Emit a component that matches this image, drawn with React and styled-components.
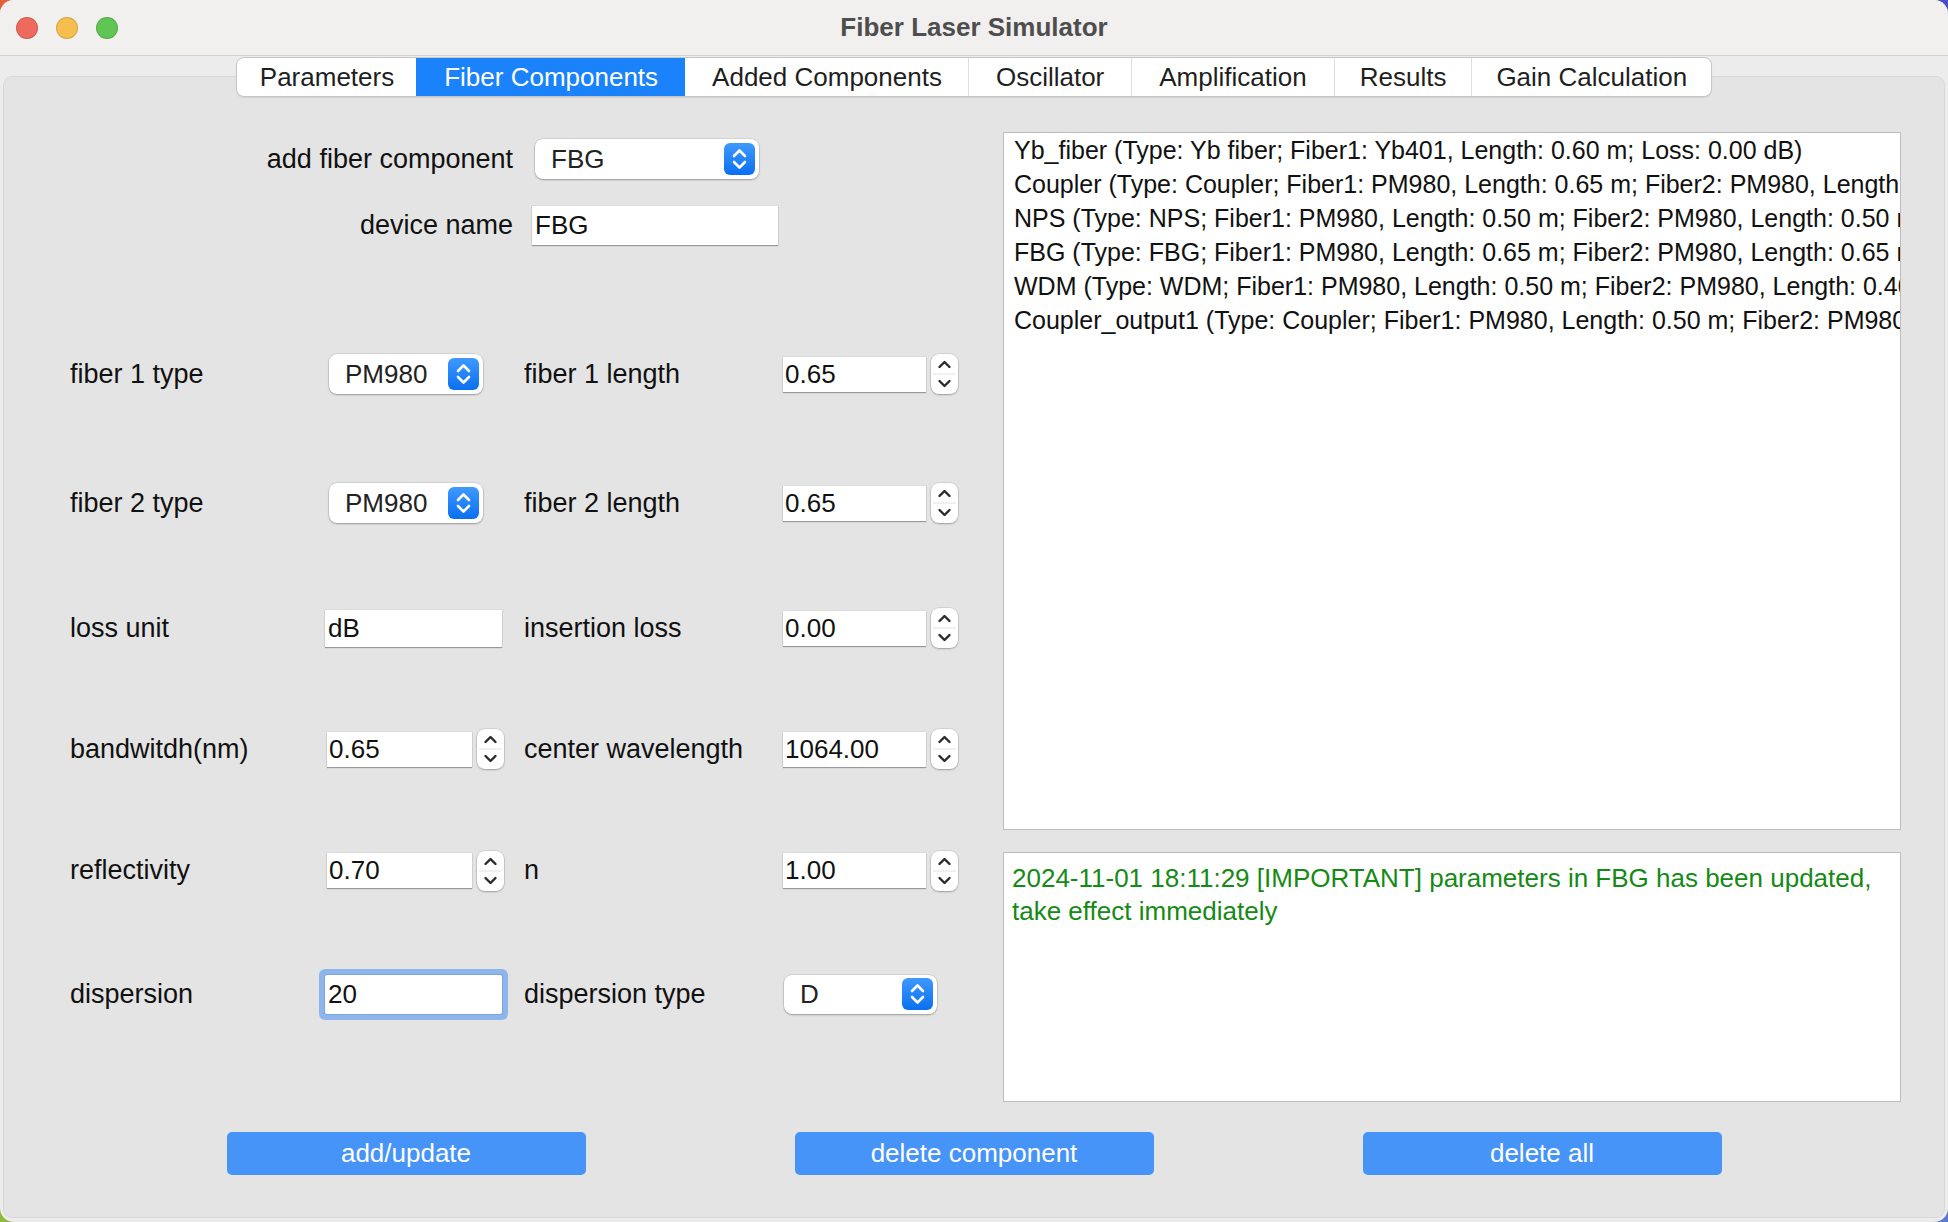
import React from 'react';
import styled, { createGlobalStyle } from 'styled-components';

const Global = createGlobalStyle`
  html, body { margin: 0; padding: 0; width: 1948px; height: 1222px; overflow: hidden; }
  body {
    background-color: #6d7fb8;
    background-image:
      radial-gradient(circle at 0 0, #e2603c 0, #e2603c 40px, transparent 41px),
      radial-gradient(circle at 100% 0, #4b4fc7 0, #4b4fc7 40px, transparent 41px),
      radial-gradient(circle at 0 100%, #8fba3a 0, #8fba3a 40px, transparent 41px),
      radial-gradient(circle at 100% 100%, #5b7ad0 0, #5b7ad0 40px, transparent 41px);
    font-family: "Liberation Sans", Arial, sans-serif;
  }
  #root { width: 1948px; height: 1222px; }
`;

const Window = styled.div`
  width: 1948px;
  height: 1222px;
  display: flex;
  flex-direction: column;
  background: #ececec;
  border-radius: 14px;
  overflow: hidden;
`;

const TitleBar = styled.div`
  height: 56px;
  flex: none;
  box-sizing: border-box;
  display: grid;
  grid-template-columns: 1fr auto 1fr;
  align-items: center;
  background: #f1f0ee;
  border-bottom: 1px solid #d3d3d3;
  padding: 0 16px;
`;

const Lights = styled.div`
  display: flex;
  gap: 18px;
`;

const Light = styled.span`
  width: 22px;
  height: 22px;
  border-radius: 50%;
  background: ${p => p.$c};
  box-shadow: inset 0 0 0 1px rgba(0, 0, 0, 0.12);
`;

const Title = styled.div`
  font-size: 26px;
  font-weight: bold;
  color: #4e4e4e;
`;

const Content = styled.div`
  flex: 1;
  display: flex;
  flex-direction: column;
  align-items: stretch;
  padding: 1px 3px 4px;
  min-height: 0;
`;

const TabBar = styled.div`
  align-self: center;
  display: flex;
  height: 40px;
  box-sizing: border-box;
  background: #fff;
  border: 1px solid #c6c6c6;
  border-radius: 8px;
  overflow: hidden;
  margin-bottom: -21px;
  position: relative;
  z-index: 1;
  box-shadow: 0 1px 1px rgba(0, 0, 0, 0.08);
`;

const Tab = styled.div`
  display: flex;
  align-items: center;
  padding: 0 ${p => p.$pad}px;
  font-size: 26px;
  color: ${p => (p.$active ? '#fff' : '#1f1f1f')};
  background: ${p => (p.$active ? '#1a82fb' : 'transparent')};
  border-left: 1px solid ${p => (p.$first || p.$active || p.$afterActive ? 'transparent' : '#dedede')};
  white-space: nowrap;
`;

const Pane = styled.div`
  flex: 1;
  display: flex;
  flex-direction: column;
  background: #e4e4e4;
  border: 1px solid #d8d8d8;
  border-radius: 9px;
  padding: 55px 43px 0 66px;
  min-height: 0;
`;

const Main = styled.div`
  display: flex;
  height: 970px;
`;

const LeftCol = styled.div`
  width: 933px;
  flex: none;
  display: flex;
  flex-direction: column;
`;

const RightCol = styled.div`
  width: 898px;
  flex: none;
  min-width: 0;
  display: flex;
  flex-direction: column;
  gap: 22px;
`;

const TopForm = styled.div`
  display: grid;
  grid-template-columns: 443px auto;
  grid-template-rows: 54px 78px;
  column-gap: 19px;
  align-items: center;
  justify-content: start;
`;

const FieldGrid = styled.div`
  margin-top: 45px;
  display: grid;
  grid-template-columns: 255px 199px 259px auto;
  grid-template-rows: 130px 128px 122px 120px 123px 124px;
  align-items: center;
  justify-content: start;
`;

const Label = styled.div`
  font-size: 27px;
  color: #111;
  white-space: nowrap;
  justify-self: ${p => (p.$right ? 'end' : 'start')};
`;

const Cell = styled.div`
  display: flex;
  align-items: center;
  margin-left: ${p => p.$ml || 0}px;
`;

const Combo = styled.div`
  width: ${p => p.$w}px;
  height: ${p => p.$h || 40}px;
  box-sizing: border-box;
  background: #fff;
  border-radius: 8px;
  box-shadow: 0 0 0 0.5px rgba(0, 0, 0, 0.14), 0 1px 2px rgba(0, 0, 0, 0.28);
  display: flex;
  align-items: center;
  justify-content: space-between;
  padding: 0 4px 0 16px;
  font-size: 26px;
  color: #222;
`;

const ComboButton = styled.span`
  width: 31px;
  height: 32px;
  border-radius: 6px;
  background: linear-gradient(#3f99ff, #0a70ef);
  display: flex;
  align-items: center;
  justify-content: center;
`;

const TextField = styled.div`
  width: ${p => p.$w}px;
  height: ${p => p.$h || 37}px;
  box-sizing: border-box;
  background: #fff;
  display: flex;
  align-items: center;
  padding-left: ${p => p.$pl || 3}px;
  font-size: 26px;
  color: #111;
  box-shadow: 0 0 0 0.5px rgba(0, 0, 0, 0.08), 0 1px 1px rgba(0, 0, 0, 0.3);
  ${p =>
    p.$focused &&
    `
    border-radius: 2px;
    box-shadow: 0 0 0 1px #7aa6e3, 0 0 0 6px #8fb6ea;
  `}
`;

const SpinWrap = styled.div`
  display: flex;
  align-items: center;
  gap: 5px;
`;

const SpinArrows = styled.div`
  width: 27px;
  height: 40px;
  box-sizing: border-box;
  background: #fff;
  border-radius: 8px;
  box-shadow: 0 0 0 0.5px rgba(0, 0, 0, 0.14), 0 1px 2px rgba(0, 0, 0, 0.25);
  display: flex;
  align-items: center;
  justify-content: center;
`;

const ListBox = styled.div`
  height: 698px;
  box-sizing: border-box;
  background: #fff;
  border: 1px solid #bdbdbd;
  padding: 0 0 0 10px;
  overflow: hidden;
`;

const ListLine = styled.div`
  font-size: 25px;
  line-height: 34px;
  color: #111;
  white-space: nowrap;
`;

const LogBox = styled.div`
  height: 250px;
  box-sizing: border-box;
  background: #fff;
  border: 1px solid #bdbdbd;
  padding: 9px 8px 0 8px;
  font-size: 26px;
  line-height: 33px;
  color: #158a15;
  overflow: hidden;
`;

const ButtonRow = styled.div`
  margin-top: 30px;
  margin-left: -66px;
  margin-right: -43px;
  display: flex;
  justify-content: center;
  gap: 209px;
`;

const Button = styled.div`
  width: 359px;
  height: 43px;
  border-radius: 5px;
  background: #4694f7;
  color: #fff;
  font-size: 26px;
  display: flex;
  align-items: center;
  justify-content: center;
`;

const ComboIcon = () => (
  <svg width="31" height="32" viewBox="0 0 31 32">
    <path d="M10 13 L15.5 7.5 L21 13" fill="none" stroke="#fff" strokeWidth="2.6" strokeLinecap="round" strokeLinejoin="round" />
    <path d="M10 19 L15.5 24.5 L21 19" fill="none" stroke="#fff" strokeWidth="2.6" strokeLinecap="round" strokeLinejoin="round" />
  </svg>
);

const SpinIcon = () => (
  <svg width="27" height="40" viewBox="0 0 27 40">
    <line x1="2" y1="20" x2="25" y2="20" stroke="#e2e2e2" strokeWidth="1" />
    <path d="M8.5 13 L13.5 8 L18.5 13" fill="none" stroke="#2a2a2a" strokeWidth="2.4" strokeLinecap="round" strokeLinejoin="round" />
    <path d="M8.5 27 L13.5 32 L18.5 27" fill="none" stroke="#2a2a2a" strokeWidth="2.4" strokeLinecap="round" strokeLinejoin="round" />
  </svg>
);

const ComboField = ({ value, w, h }) => (
  <Combo $w={w} $h={h}>
    <span>{value}</span>
    <ComboButton>
      <ComboIcon />
    </ComboButton>
  </Combo>
);

const Spin = ({ value, w }) => (
  <SpinWrap>
    <TextField $w={w} $h={35} $pl={2}>{value}</TextField>
    <SpinArrows>
      <SpinIcon />
    </SpinArrows>
  </SpinWrap>
);

const tabs = [
  { name: 'Parameters', pad: 22 },
  { name: 'Fiber Components', pad: 27 },
  { name: 'Added Components', pad: 26 },
  { name: 'Oscillator', pad: 27 },
  { name: 'Amplification', pad: 27 },
  { name: 'Results', pad: 25 },
  { name: 'Gain Calculation', pad: 24 },
];

const components = [
  'Yb_fiber (Type: Yb fiber; Fiber1: Yb401, Length: 0.60 m; Loss: 0.00 dB)',
  'Coupler (Type: Coupler; Fiber1: PM980, Length: 0.65 m; Fiber2: PM980, Length: 0.65 m; Loss: 0.00 dB)',
  'NPS (Type: NPS; Fiber1: PM980, Length: 0.50 m; Fiber2: PM980, Length: 0.50 m; Loss: 0.00 dB)',
  'FBG (Type: FBG; Fiber1: PM980, Length: 0.65 m; Fiber2: PM980, Length: 0.65 m; Loss: 0.00 dB)',
  'WDM (Type: WDM; Fiber1: PM980, Length: 0.50 m; Fiber2: PM980, Length: 0.40 m; Loss: 0.00 dB)',
  'Coupler_output1 (Type: Coupler; Fiber1: PM980, Length: 0.50 m; Fiber2: PM980, Length: 0.50 m)',
];

export default function App() {
  return (
    <>
      <Global />
      <Window>
        <TitleBar>
          <Lights>
            <Light $c="#ee6a5f" />
            <Light $c="#f5be4f" />
            <Light $c="#61c554" />
          </Lights>
          <Title>Fiber Laser Simulator</Title>
          <div />
        </TitleBar>
        <Content>
          <TabBar>
            {tabs.map((t, i) => (
              <Tab
                key={t.name}
                $pad={t.pad}
                $first={i === 0}
                $active={i === 1}
                $afterActive={i === 2}
              >
                {t.name}
              </Tab>
            ))}
          </TabBar>
          <Pane>
            <Main>
              <LeftCol>
                <TopForm>
                  <Label $right>add fiber component</Label>
                  <Cell $ml={3}>
                    <ComboField value="FBG" w={224} />
                  </Cell>
                  <Label $right>device name</Label>
                  <TextField $w={246} $h={39}>FBG</TextField>
                </TopForm>
                <FieldGrid>
                  <Label>fiber 1 type</Label>
                  <Cell $ml={4}>
                    <ComboField value="PM980" w={154} />
                  </Cell>
                  <Label>fiber 1 length</Label>
                  <Spin value="0.65" w={143} />

                  <Label>fiber 2 type</Label>
                  <Cell $ml={4}>
                    <ComboField value="PM980" w={154} />
                  </Cell>
                  <Label>fiber 2 length</Label>
                  <Spin value="0.65" w={143} />

                  <Label>loss unit</Label>
                  <TextField $w={177}>dB</TextField>
                  <Label>insertion loss</Label>
                  <Spin value="0.00" w={143} />

                  <Label>bandwitdh(nm)</Label>
                  <Cell $ml={2}>
                    <Spin value="0.65" w={145} />
                  </Cell>
                  <Label>center wavelength</Label>
                  <Spin value="1064.00" w={143} />

                  <Label>reflectivity</Label>
                  <Cell $ml={2}>
                    <Spin value="0.70" w={145} />
                  </Cell>
                  <Label>n</Label>
                  <Spin value="1.00" w={143} />

                  <Label>dispersion</Label>
                  <TextField $w={177} $h={39} $focused>20</TextField>
                  <Label>dispersion type</Label>
                  <Cell $ml={1}>
                    <ComboField value="D" w={153} h={39} />
                  </Cell>
                </FieldGrid>
              </LeftCol>
              <RightCol>
                <ListBox>
                  {components.map(c => (
                    <ListLine key={c}>{c}</ListLine>
                  ))}
                </ListBox>
                <LogBox>
                  2024-11-01 18:11:29 [IMPORTANT] parameters in FBG has been updated, take effect immediately
                </LogBox>
              </RightCol>
            </Main>
            <ButtonRow>
              <Button>add/update</Button>
              <Button>delete component</Button>
              <Button>delete all</Button>
            </ButtonRow>
          </Pane>
        </Content>
      </Window>
    </>
  );
}
